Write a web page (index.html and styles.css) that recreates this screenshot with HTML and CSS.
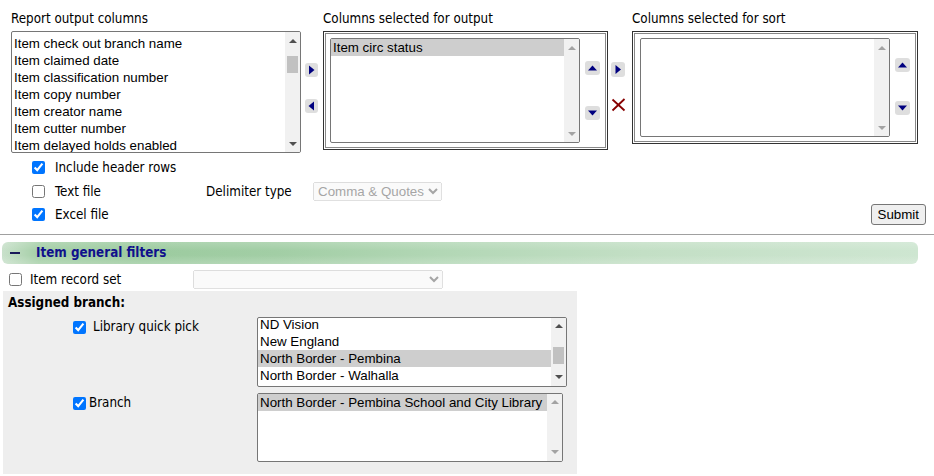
FILE: index.html
```html
<!DOCTYPE html>
<html lang="en">
<head>
  <meta charset="UTF-8">
  <meta name="viewport" content="width=device-width, initial-scale=1.0">
  <title>Item Report | Output Options</title>
  <link rel="stylesheet" href="styles.css">
</head>
<body>
<form class="report" action="#">

  <!-- column pickers -->
  <div class="columns">
    <div class="col-label">Report output columns</div>
    <div></div>
    <div class="col-label">Columns selected for output</div>
    <div></div>
    <div class="col-label">Columns selected for sort</div>

    <div class="listbox avail">
      <ul class="opts">
        <li>Item check out branch name</li>
        <li>Item claimed date</li>
        <li>Item classification number</li>
        <li>Item copy number</li>
        <li>Item creator name</li>
        <li>Item cutter number</li>
        <li>Item delayed holds enabled</li>
      </ul>
      <div class="vscroll">
        <span class="sb-btn"><i class="tri-up"></i></span>
        <span class="sb-thumb avail-thumb"></span>
        <span class="sb-fill"></span>
        <span class="sb-btn"><i class="tri-down"></i></span>
      </div>
    </div>

    <div class="move-btns">
      <span class="nav-btn"><svg width="13" height="14" viewBox="0 0 13 14"><polygon points="4,2.5 9.5,7 4,11.5" fill="#00007f"/></svg></span>
      <span class="nav-btn"><svg width="13" height="14" viewBox="0 0 13 14"><polygon points="9,2.5 3.5,7 9,11.5" fill="#00007f"/></svg></span>
    </div>

    <div class="frame output">
      <div class="frame-inner">
        <div class="listbox chosen">
          <ul class="opts">
            <li class="selected">Item circ status</li>
          </ul>
          <div class="vscroll off">
            <span class="sb-btn"><i class="tri-up"></i></span>
            <span class="sb-fill"></span>
            <span class="sb-btn"><i class="tri-down"></i></span>
          </div>
        </div>
        <div class="order-btns">
          <span class="nav-btn"><svg width="15" height="14" viewBox="0 0 15 14"><polygon points="3,9.5 7.5,4.5 12,9.5" fill="#00007f"/></svg></span>
          <span class="nav-btn"><svg width="15" height="14" viewBox="0 0 15 14"><polygon points="3,4.5 7.5,9.5 12,4.5" fill="#00007f"/></svg></span>
        </div>
      </div>
    </div>

    <div class="sort-btns">
      <span class="nav-btn"><svg width="14" height="15" viewBox="0 0 14 15"><polygon points="4.5,3 10,7.5 4.5,12" fill="#00007f"/></svg></span>
      <span class="remove"><svg width="15" height="14" viewBox="0 0 15 14"><path d="M1.5 1.5 L13.5 12.5 M13.5 1 L1.5 12.5" stroke="#870000" stroke-width="1.8" fill="none"/></svg></span>
    </div>

    <div class="frame sort">
      <div class="frame-inner">
        <div class="listbox sorted">
          <ul class="opts"></ul>
          <div class="vscroll off">
            <span class="sb-btn"><i class="tri-up"></i></span>
            <span class="sb-fill"></span>
            <span class="sb-btn"><i class="tri-down"></i></span>
          </div>
        </div>
        <div class="order-btns">
          <span class="nav-btn"><svg width="15" height="14" viewBox="0 0 15 14"><polygon points="3,9.5 7.5,4.5 12,9.5" fill="#00007f"/></svg></span>
          <span class="nav-btn"><svg width="15" height="14" viewBox="0 0 15 14"><polygon points="3,4.5 7.5,9.5 12,4.5" fill="#00007f"/></svg></span>
        </div>
      </div>
    </div>
  </div>

  <!-- file options -->
  <div class="file-opts">
    <div class="opt-row">
      <label class="opt"><input type="checkbox" checked><span>Include header rows</span></label>
    </div>
    <div class="opt-row">
      <label class="opt wide"><input type="checkbox"><span>Text file</span></label>
      <span class="delim">Delimiter type</span>
      <select class="delim-select" disabled><option>Comma &amp; Quotes</option></select>
    </div>
    <div class="opt-row">
      <label class="opt"><input type="checkbox" checked><span>Excel file</span></label>
      <button type="submit" class="submit">Submit</button>
    </div>
  </div>

  <hr class="divider">

  <!-- filters -->
  <div class="section-head">
    <span class="collapse"></span>
    <span class="section-title">Item general filters</span>
  </div>

  <div class="record-row">
    <label class="opt"><input type="checkbox"><span>Item record set</span></label>
    <select class="record-select" disabled><option></option></select>
  </div>

  <div class="branch-panel">
    <div class="panel-title">Assigned branch:</div>

    <div class="branch-row">
      <label class="opt pick"><input type="checkbox" checked><span>Library quick pick</span></label>
      <div class="listbox quick">
        <ul class="opts">
          <li>ND Vision</li>
          <li>New England</li>
          <li class="selected">North Border - Pembina</li>
          <li>North Border - Walhalla</li>
        </ul>
        <div class="vscroll">
          <span class="sb-btn"><i class="tri-up"></i></span>
          <span class="sb-thumb quick-thumb"></span>
          <span class="sb-fill"></span>
          <span class="sb-btn"><i class="tri-down"></i></span>
        </div>
      </div>
    </div>

    <div class="branch-row">
      <label class="opt pick tight"><input type="checkbox" checked><span>Branch</span></label>
      <div class="listbox branch">
        <ul class="opts">
          <li class="selected">North Border - Pembina School and City Library</li>
        </ul>
        <div class="vscroll off">
          <span class="sb-btn"><i class="tri-up"></i></span>
          <span class="sb-fill"></span>
          <span class="sb-btn"><i class="tri-down"></i></span>
        </div>
      </div>
    </div>
  </div>

</form>
</body>
</html>
```

FILE: styles.css
```css
/* Base */
* {
  box-sizing: border-box;
}

body {
  margin: 0;
  font-family: "DejaVu Sans Condensed", "DejaVu Sans", sans-serif;
  font-stretch: condensed;
  font-size: 13.3px;
  color: #000;
  background: #fff;
}

.report {
  padding-top: 11px;
}

/* Column pickers */
.columns {
  display: grid;
  grid-template-columns: 290px 22px 285px 24px 286px;
  grid-template-rows: 16px auto;
  row-gap: 4px;
  padding-left: 11px;
  align-items: start;
}

.col-label {
  line-height: 16px;
  white-space: nowrap;
}

.listbox {
  display: flex;
  border: 1px solid #767676;
  border-radius: 2px;
  background: #fff;
  overflow: hidden;
}

.listbox .opts {
  flex: 1;
  min-width: 0;
  list-style: none;
  margin: 0;
  padding: 0;
  font-family: "Liberation Sans", Arial, sans-serif;
  font-stretch: normal;
  font-size: 13.33px;
  overflow: hidden;
}

.opts li {
  height: 17px;
  line-height: 17px;
  padding-left: 2px;
  white-space: nowrap;
}

.opts li.selected {
  background: #cecece;
}

.avail {
  width: 290px;
  height: 122px;
}

.avail .opts {
  padding-top: 3px;
}

.chosen,
.sorted {
  width: 250px;
}

.chosen {
  height: 105px;
}

.sorted {
  height: 99px;
}

/* fake scrollbars */
.vscroll {
  width: 15px;
  flex: none;
  display: flex;
  flex-direction: column;
  background: #f1f1f1;
}

.sb-btn {
  height: 17px;
  display: flex;
  align-items: center;
  justify-content: center;
  flex: none;
}

.sb-fill {
  flex: 1;
}

.sb-thumb {
  height: 17px;
  margin: 0 2px;
  background: #c1c1c1;
  flex: none;
}

.avail-thumb {
  margin-top: 7px;
}

.quick-thumb {
  margin-top: 12px;
  height: 17px;
}

.tri-up,
.tri-down {
  width: 0;
  height: 0;
  border-left: 4px solid transparent;
  border-right: 4px solid transparent;
}

.tri-up {
  border-bottom: 4px solid #505050;
}

.tri-down {
  border-top: 4px solid #505050;
}

.vscroll.off .tri-up {
  border-bottom-color: #a3a3a3;
}

.vscroll.off .tri-down {
  border-top-color: #a3a3a3;
}

/* arrow buttons */
.nav-btn {
  display: flex;
  background: #dedede;
  border-radius: 3px;
}

.move-btns {
  display: flex;
  flex-direction: column;
  gap: 22px;
  padding: 32px 0 0 4px;
  align-items: flex-start;
}

.frame {
  border: 1px solid #333;
  padding: 1px;
}

.frame-inner {
  display: flex;
  border: 1px solid #888;
  padding: 4px 3px 4px 4px;
  gap: 5px;
}

.sort .frame-inner {
  padding-left: 5px;
}

.order-btns {
  display: flex;
  flex-direction: column;
  padding-top: 23px;
  gap: 31px;
}

.sort .order-btns {
  padding-top: 20px;
  gap: 29px;
}

.sort-btns {
  display: flex;
  flex-direction: column;
  align-items: flex-start;
  gap: 21px;
  padding: 31px 0 0 3px;
}

.remove {
  display: flex;
}

/* File options */
.file-opts {
  padding-top: 3px;
}

.opt-row {
  display: flex;
  align-items: center;
  height: 23.5px;
  padding-left: 32px;
  padding-right: 8px;
}

.opt {
  display: flex;
  align-items: center;
  white-space: nowrap;
}

.opt input {
  width: 13px;
  height: 13px;
  margin: 0 10px 0 0;
}

.opt.wide {
  width: 174px;
}

.delim {
  width: 107px;
}

.delim-select {
  width: 129px;
  height: 19px;
  font-family: "Liberation Sans", Arial, sans-serif;
  font-size: 13.33px;
}

.submit {
  margin-left: auto;
  height: 21px;
  padding: 0 6px;
  font-family: "Liberation Sans", Arial, sans-serif;
  font-size: 13.33px;
  background: #efefef;
  border: 1px solid #767676;
  border-radius: 3px;
  color: #000;
}

.divider {
  margin: 7px 0 0;
  border: 0;
  border-top: 1px solid #a0a0a0;
}

/* Filter section */
.section-head {
  display: flex;
  align-items: center;
  height: 22px;
  width: 916px;
  margin: 7px 0 0 2px;
  border-radius: 6px;
  background:
    linear-gradient(to bottom, rgba(255, 255, 255, 0.18), rgba(255, 255, 255, 0) 40%, rgba(255, 255, 255, 0) 60%, rgba(255, 255, 255, 0.2)),
    linear-gradient(to right, #c9e1cb 0%, #a5cfa7 4%, #9ccb9f 15%, #a2cea5 30%, #b4d8b7 50%, #c3dfc5 70%, #cee6d1 100%);
}

.collapse {
  width: 10px;
  height: 2px;
  margin-left: 8px;
  background: #1a1a5a;
}

.section-title {
  margin-left: 16px;
  font-weight: bold;
  color: #10108c;
}

.record-row {
  display: flex;
  align-items: center;
  height: 19px;
  margin-top: 6px;
  padding-left: 9px;
}

.record-row .opt {
  width: 184px;
}

.record-row .opt input {
  margin-right: 8px;
}

.record-select {
  width: 250px;
  height: 19px;
  font-family: "Liberation Sans", Arial, sans-serif;
  font-size: 13.33px;
}

.branch-panel {
  width: 574px;
  margin: 2px 0 0 3px;
  padding: 4px 0 12px 5px;
  background: #eeeeee;
}

.panel-title {
  font-weight: bold;
  line-height: 16px;
}

.branch-row {
  display: flex;
  align-items: flex-start;
  margin-top: 6px;
}

.opt.pick {
  width: 249px;
  padding: 2px 0 0 65px;
  align-items: flex-end;
}

.opt.pick input {
  margin-right: 7px;
}

.opt.pick.tight input {
  margin-right: 3px;
}

.quick {
  width: 310px;
  height: 70px;
}

.quick .opts {
  margin-top: -2px;
}

.branch {
  width: 306px;
  height: 69px;
}
```
